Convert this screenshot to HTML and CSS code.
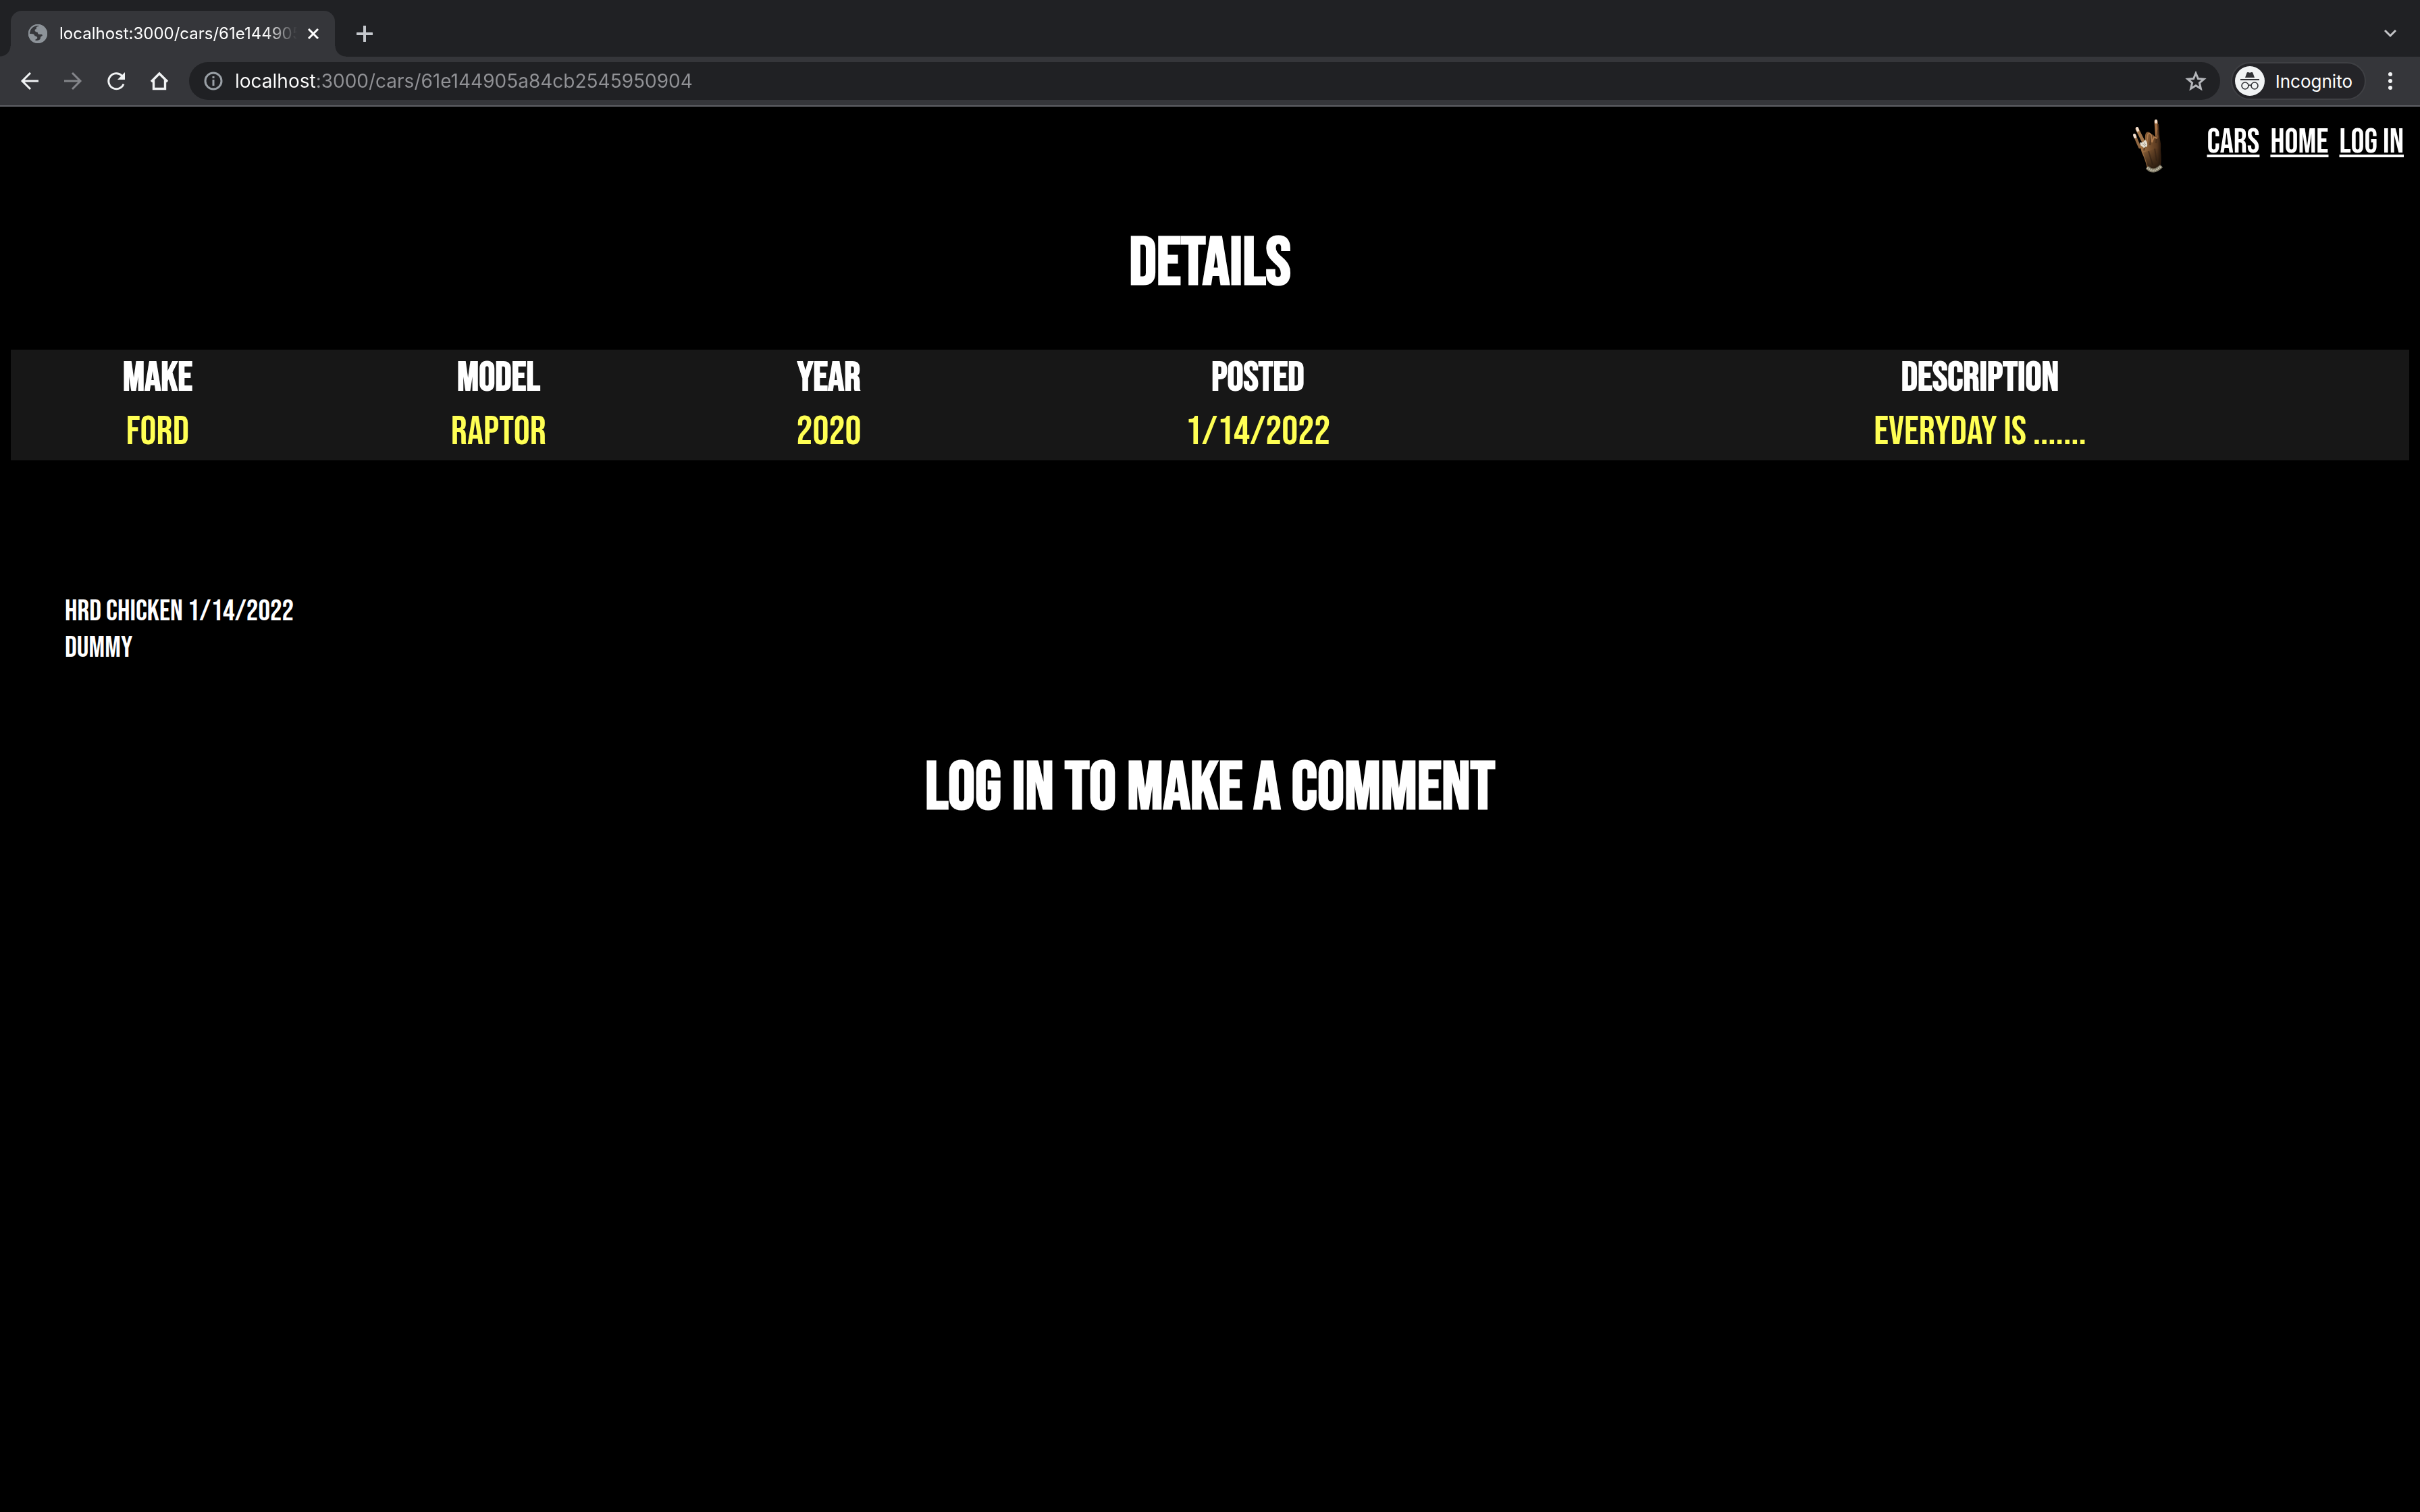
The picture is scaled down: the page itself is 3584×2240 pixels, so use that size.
FILE: index.html
```html
<!DOCTYPE html>
<html lang="en">
<head>
<meta charset="utf-8">
<title>localhost:3000/cars/61e144905a84cb2545950904</title>
<link rel="stylesheet" href="styles.css">
</head>
<body>
<div class="browser">
  <div class="tab-strip">
    <div class="tab">
      <svg class="icon-28" viewBox="0 0 28 28" aria-hidden="true"><circle cx="14" cy="14" r="14" fill="#8d9399"/><path d="M16 3C12 3 11 5 12 7c-3 0-3 3-1 4 1 1 3 0 3 2 0 2 2 2 5 2 2 0 3 2 0 3-2 1 0 4-3 5-2 1-5 2-6 0 2-1 4-2 3-4-1-2-4-1-4-3-1-2-4-2-7-2 0-5 2-9 6-11 3-1 6-2 8 0z" fill="#35363a"/><circle cx="14" cy="14" r="13" fill="none" stroke="#8d9399" stroke-width="2"/></svg>
      <span class="tab-title">localhost:3000/cars/61e144905a84cb2545950904</span>
      <button class="icon-button tab-close" aria-label="Close tab"><svg width="20" height="20" viewBox="0 0 20 20"><path d="M3 3l14 14M17 3L3 17" stroke="#fff" stroke-width="3"/></svg></button>
    </div>
    <button class="icon-button new-tab" aria-label="New tab"><svg width="24" height="24" viewBox="0 0 24 24"><path d="M12 1v22M1 12h22" stroke="#c4c7cc" stroke-width="4" stroke-linecap="round"/></svg></button>
    <button class="icon-button tab-search" aria-label="Search tabs"><svg width="20" height="14" viewBox="0 0 20 14"><path d="M2 2l8 8 8-8" fill="none" stroke="#c4c5c8" stroke-width="3"/></svg></button>
  </div>
  <div class="toolbar">
    <div class="nav-buttons">
      <button class="icon-button" aria-label="Back"><svg class="icon-32" viewBox="0 0 32 32"><path d="M29 16H5M17 4L5 16l12 12" fill="none" stroke="#f1f3f4" stroke-width="3"/></svg></button>
      <button class="icon-button" aria-label="Forward" disabled><svg class="icon-32" viewBox="0 0 32 32"><path d="M3 16h24M15 4l12 12-12 12" fill="none" stroke="#84858a" stroke-width="3"/></svg></button>
      <button class="icon-button" aria-label="Reload"><svg class="icon-32" viewBox="0 0 32 32"><path d="M27 20.500A11.500 11.500 0 1 1 24.500 8.200" fill="none" stroke="#f1f3f4" stroke-width="3"/><path d="M29 3v11H18z" fill="#f1f3f4"/></svg></button>
      <button class="icon-button" aria-label="Home"><svg class="icon-32" viewBox="0 0 32 32"><path d="M4 17L16 5l12 12M7.500 15v12.500h17V15" fill="none" stroke="#f1f3f4" stroke-width="3.400"/></svg></button>
    </div>
    <div class="address-bar">
      <svg class="icon-28" viewBox="0 0 28 28" aria-hidden="true"><circle cx="14" cy="14" r="12" fill="none" stroke="#9aa0a6" stroke-width="3"/><path d="M14 7v3M14 12v9" stroke="#9aa0a6" stroke-width="3"/></svg>
      <input class="address" type="text" aria-label="Address" value="localhost:3000/cars/61e144905a84cb2545950904">
      <button class="icon-button" aria-label="Bookmark this page"><svg class="icon-32" viewBox="0 0 32 32"><path d="M16 4.500l3.400 8 8.600.7-6.600 5.700 2 8.400-7.400-4.500-7.400 4.500 2-8.400L4 13.200l8.600-.7z" fill="none" stroke="#b4b6ba" stroke-width="3"/></svg></button>
    </div>
    <button class="profile">
      <svg class="avatar" viewBox="0 0 44 44" aria-hidden="true"><circle cx="22" cy="22" r="22" fill="#f1f3f4"/><path d="M15 17l2.500-7q.5-1.500 2-1l2.500.8 2.500-.8q1.500-.5 2 1L29 17z" fill="#303135"/><path d="M8 20h28" stroke="#303135" stroke-width="2"/><circle cx="15" cy="29" r="5" fill="none" stroke="#303135" stroke-width="1.600"/><circle cx="29" cy="29" r="5" fill="none" stroke="#303135" stroke-width="1.600"/><path d="M20 29q2-2 4 0" fill="none" stroke="#303135" stroke-width="1.600"/></svg>
      <span>Incognito</span>
    </button>
    <button class="icon-button menu" aria-label="Menu"><svg width="8" height="28" viewBox="0 0 8 28"><g fill="#f1f3f4"><circle cx="4" cy="4" r="3"/><circle cx="4" cy="14" r="3"/><circle cx="4" cy="24" r="3"/></g></svg></button>
  </div>
</div>
<header class="site-header">
  <svg class="hand" viewBox="0 0 80 100" role="img" aria-label="Hand sign">
    <defs>
      <linearGradient id="skin" x1="0" y1="0" x2="1" y2="0"><stop offset="0" stop-color="#a87848"/><stop offset=".45" stop-color="#7c5430"/><stop offset=".8" stop-color="#5a3a20"/><stop offset="1" stop-color="#2a180c"/></linearGradient>
      <linearGradient id="wrist" x1="0" y1="0" x2="0" y2="1"><stop offset="0" stop-color="#24180e" stop-opacity="0"/><stop offset="1" stop-color="#1b1109" stop-opacity=".8"/></linearGradient>
    </defs>
    <path d="M22 35q2 7 7 17" stroke="#8f6640" stroke-width="4" stroke-linecap="round" fill="none"/>
    <path d="M25 25q5 10 10 20" stroke="#a0754a" stroke-width="5" stroke-linecap="round" fill="none"/>
    <path d="M53 14q1 18 3 34" stroke="#a26e42" stroke-width="5" stroke-linecap="round" fill="none"/>
    <path d="M56 18q1 14 2 30" stroke="#4a2d19" stroke-width="2" fill="none"/>
    <path d="M29 49l8-8q-1-8 2-11 4-2 7 3 4 0 5 4l7 1q3 8 2 18 2 18-1 27l-9 4-10-4q-3-13-8-23z" fill="url(#skin)"/>
    <path d="M35 57l4-14 2-11M44 49l2-15M53 46l3-20M42 58l6 20M51 54l3 18" stroke="#3c2717" stroke-width="2" opacity=".6" fill="none"/>
    <path d="M39 46l2-13q2-3 5 1l1 11M47 45l3-8 5 2" stroke="#b07c4e" stroke-width="2" fill="none"/>
    <path d="M34 60l26-8-1 31-17 1z" fill="url(#wrist)"/>
    <path d="M29 45q5 1 8-4 4 4 3 10l-5 2-5-4z" fill="#e4ded0"/>
    <path d="M33 47l5 4M35 45l3 4" stroke="#9c9482" stroke-width="1"/>
    <path d="M40 82q9 10 21-2" stroke="#77715f" stroke-width="6" fill="none"/>
    <path d="M40 82q9 10 21-2" stroke="#c4bfaa" stroke-width="3" stroke-dasharray="2 1" fill="none"/>
    <path d="M21 34l1 3M25 24l1 3M53 13v2" stroke="#f3dfcf" stroke-width="4" stroke-linecap="round"/>
  </svg>
  <nav class="site-nav">
    <a href="#cars">CARS</a>
    <a href="#home">HOME</a>
    <a href="#login">LOG IN</a>
  </nav>
</header>
<main class="page">
  <h1 class="heading">DETAILS</h1>
  <table class="details">
    <colgroup><col class="col-make"><col class="col-model"><col class="col-year"><col class="col-posted"><col class="col-description"></colgroup>
    <thead><tr><th scope="col">MAKE</th><th scope="col">MODEL</th><th scope="col">YEAR</th><th scope="col">POSTED</th><th scope="col">DESCRIPTION</th></tr></thead>
    <tbody><tr><td>FORD</td><td>RAPTOR</td><td>2020</td><td>1/14/2022</td><td>EVERYDAY IS .......</td></tr></tbody>
  </table>
  <section class="comments" aria-label="Comments">
    <p>HRD CHICKEN 1/14/2022</p>
    <p>DUMMY</p>
  </section>
  <h2 class="heading">LOG IN TO MAKE A COMMENT</h2>
</main>
</body>
</html>
```
FILE: styles.css
```css
* {
  box-sizing: border-box;
}

body {
  margin: 0;
  min-height: 100vh;
  background: #000;
  color: #fff;
  font-family: "Bebas Neue", "Roboto Condensed", "Liberation Sans", sans-serif;
}

/* Browser window */
.browser {
  background: #35363a;
  border-bottom: 2px solid #606166;
  font-family: Inter, Roboto, sans-serif;
}

.icon-button {
  display: flex;
  align-items: center;
  justify-content: center;
  flex: none;
  padding: 0;
  border: 0;
  background: none;
}

.icon-28 {
  width: 28px;
  height: 28px;
  flex: none;
}

.icon-32 {
  width: 32px;
  height: 32px;
  flex: none;
}

.tab-strip {
  display: flex;
  align-items: flex-end;
  height: 84px;
  padding: 0 16px;
  background: #202124;
}

.tab {
  position: relative;
  display: flex;
  align-items: center;
  width: 480px;
  height: 68px;
  padding: 0 22px 0 26px;
  border-radius: 16px 16px 0 0;
  background: #35363a;
}

/* Flared feet on both sides of the active tab */
.tab::before,
.tab::after {
  content: "";
  position: absolute;
  bottom: 0;
  width: 16px;
  height: 16px;
}

.tab::before {
  right: 100%;
  background: radial-gradient(circle at 0 0, #202124 15px, #35363a 16px);
}

.tab::after {
  left: 100%;
  background: radial-gradient(circle at 100% 0, #202124 15px, #35363a 16px);
}

.tab-title {
  flex: 1;
  margin: 0 14px 0 18px;
  overflow: hidden;
  white-space: nowrap;
  font-size: 24px;
  line-height: 32px;
  mask-image: linear-gradient(to right, #000 calc(100% - 48px), transparent);
}

.new-tab {
  width: 56px;
  height: 68px;
  margin-left: 16px;
}

.tab-search {
  width: 56px;
  height: 68px;
  margin-left: auto;
}

.toolbar {
  display: flex;
  align-items: center;
  height: 72px;
  padding: 0 32px 0 28px;
}

.nav-buttons {
  display: flex;
  gap: 32px;
  margin-right: 28px;
}

.address-bar {
  display: flex;
  flex: 1;
  align-items: center;
  gap: 18px;
  height: 56px;
  padding: 0 20px 0 22px;
  border-radius: 28px;
  background: #202124;
}

.address {
  flex: 1;
  min-width: 0;
  height: 40px;
  padding: 0;
  border: 0;
  outline: 0;
  background: linear-gradient(to right, #fff 119px, #919296 119px);
  background-clip: text;
  color: transparent;
  font-family: inherit;
  font-size: 28px;
}

.profile {
  display: flex;
  align-items: center;
  gap: 16px;
  height: 56px;
  margin: 0 24px 0 16px;
  padding: 0 18px 0 4px;
  border: 2px solid #3f4044;
  border-radius: 28px;
  background: #242428;
  color: #fff;
  font-family: inherit;
  font-size: 26px;
}

.avatar {
  width: 44px;
  height: 44px;
}

.menu {
  width: 24px;
}

/* Site */
.site-header {
  display: flex;
  align-items: flex-start;
  justify-content: flex-end;
  gap: 48px;
  height: 106px;
  padding: 8px 24px 0;
}

.hand {
  width: 80px;
  height: 100px;
}

.site-nav {
  display: flex;
  gap: 16px;
  padding-top: 15px;
  font-size: 50px;
  line-height: 60px;
}

.site-nav a {
  color: #fff;
  text-decoration: underline;
  text-decoration-thickness: 4px;
  text-underline-offset: 3px;
}

.page {
  padding: 0 16px;
}

.heading {
  margin: 67px 0;
  font-size: 100px;
  font-weight: 700;
  line-height: 120px;
  text-align: center;
}

.details {
  width: 100%;
  table-layout: fixed;
  border-spacing: 4px;
  background: #171717;
  font-size: 60px;
  line-height: 72px;
  text-align: center;
}

.details th,
.details td {
  padding: 2px;
}

.details td {
  color: #ffff54;
}

.col-make { width: 12.1%; }
.col-model { width: 16.3%; }
.col-year { width: 11.2%; }
.col-posted { width: 24.6%; }
.col-description { width: 35.8%; }

.comments {
  margin: 197px 80px 121px;
  font-size: 44px;
  line-height: 54px;
}

.comments p {
  margin: 0;
}
```
